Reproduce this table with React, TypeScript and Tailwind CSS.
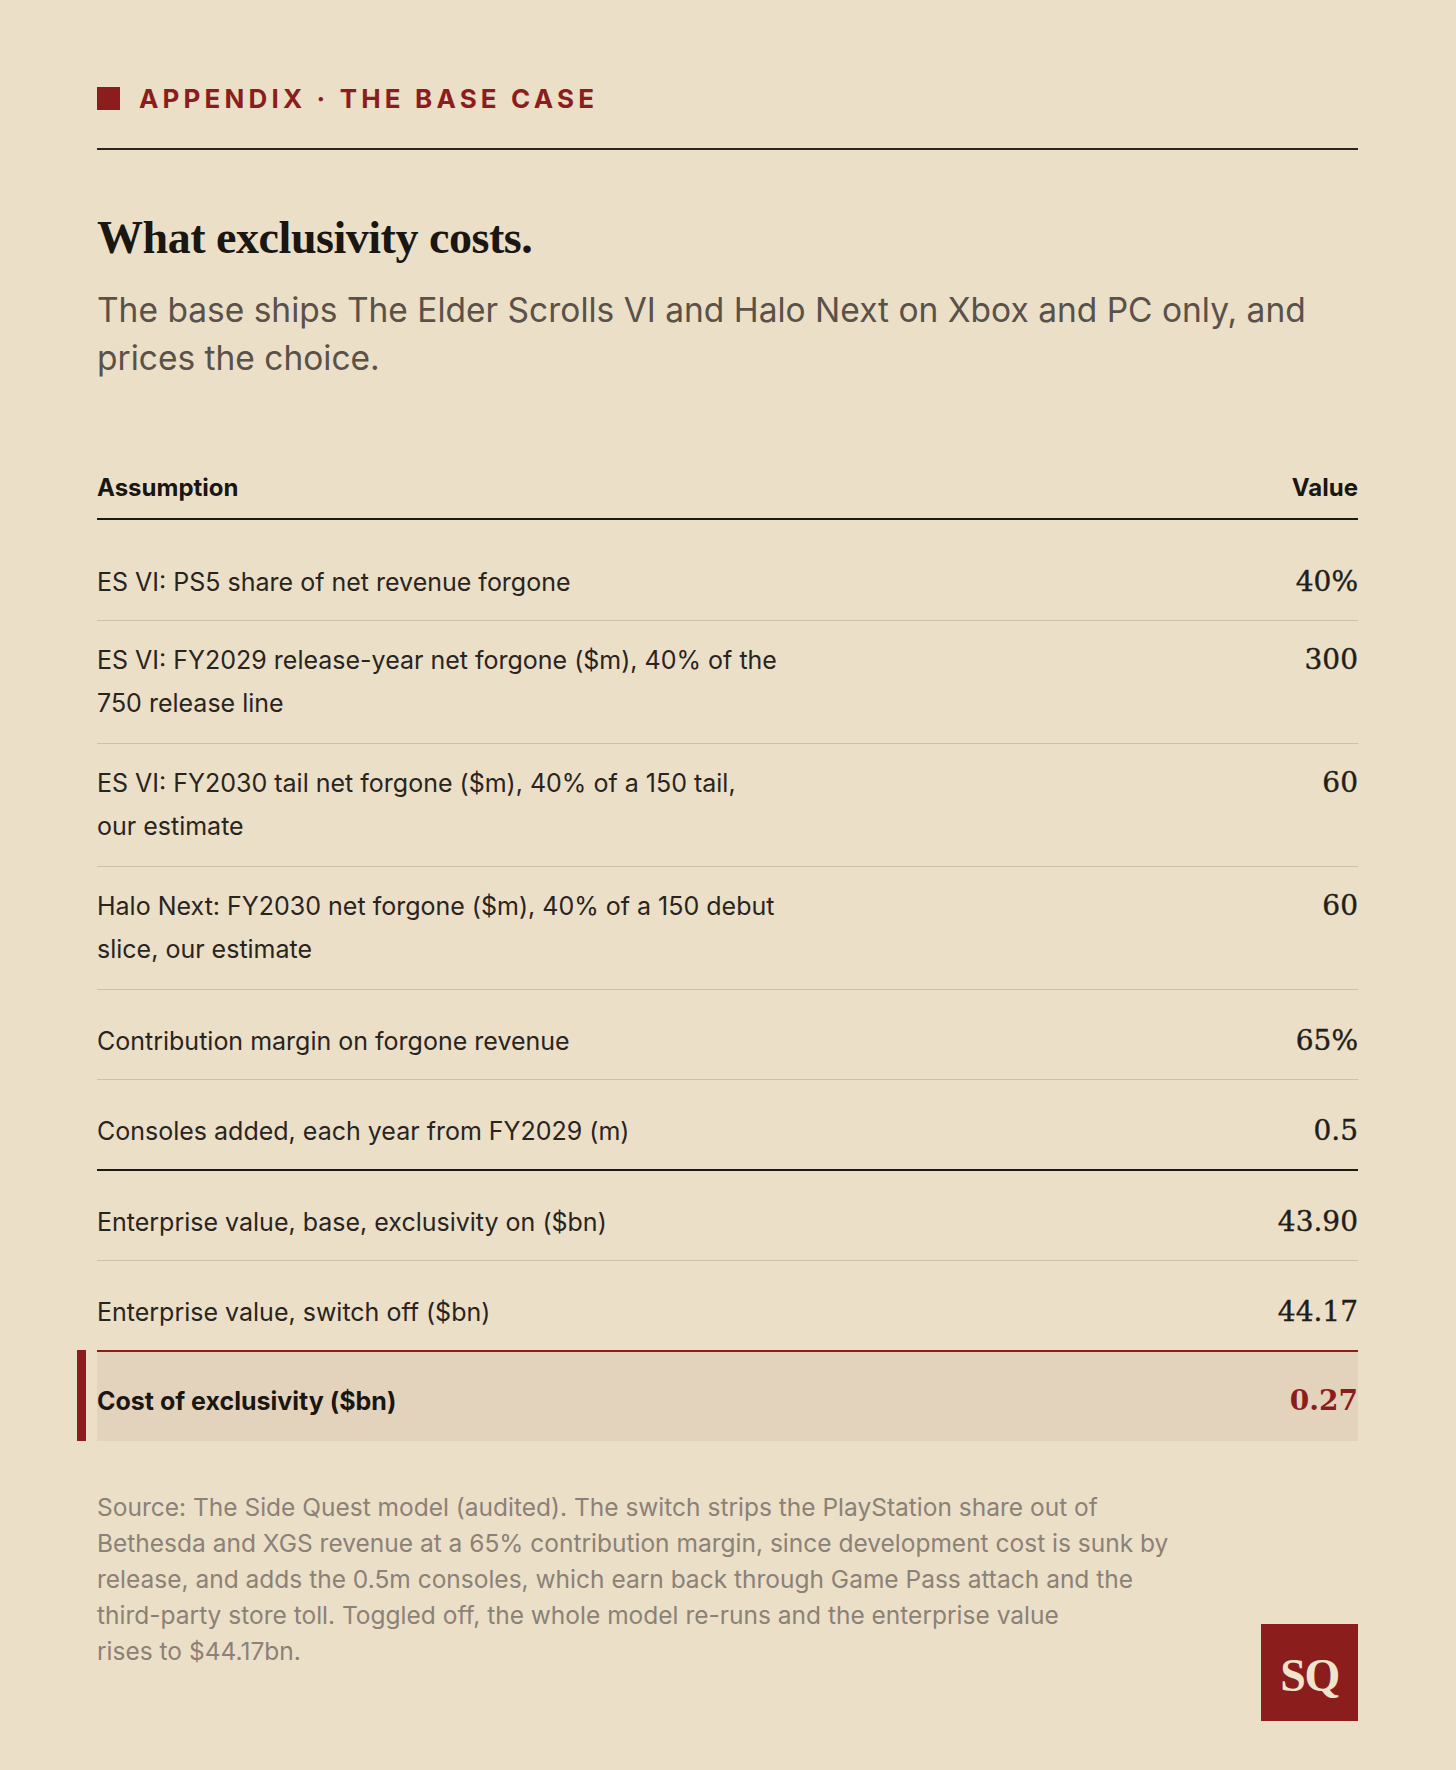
import React from "react";

type Row = {
  lines: string[];
  value: string;
  border: "light" | "dark" | "none";
  first?: boolean;
};

const rows: Row[] = [
  { lines: ["ES VI: PS5 share of net revenue forgone"], value: "40%", border: "light", first: true },
  { lines: ["ES VI: FY2029 release-year net forgone ($m), 40% of the", "750 release line"], value: "300", border: "light" },
  { lines: ["ES VI: FY2030 tail net forgone ($m), 40% of a 150 tail,", "our estimate"], value: "60", border: "light" },
  { lines: ["Halo Next: FY2030 net forgone ($m), 40% of a 150 debut", "slice, our estimate"], value: "60", border: "light" },
  { lines: ["Contribution margin on forgone revenue"], value: "65%", border: "light" },
  { lines: ["Consoles added, each year from FY2029 (m)"], value: "0.5", border: "dark" },
  { lines: ["Enterprise value, base, exclusivity on ($bn)"], value: "43.90", border: "light" },
  { lines: ["Enterprise value, switch off ($bn)"], value: "44.17", border: "none" },
];

function TableRow({ row }: { row: Row }) {
  const single = row.lines.length === 1;
  const pad = row.first
    ? "pt-[41px] pb-[16px]"
    : single
    ? "pt-[30px] pb-[16px]"
    : "pt-[18px] pb-[18px]";
  const border =
    row.border === "light"
      ? "border-b border-[#cdbfa9]"
      : row.border === "dark"
      ? "border-b-2 border-[#1d1915]"
      : "";
  return (
    <div className={`flex items-start justify-between ${pad} ${border}`}>
      <div className="text-[25px] leading-[43px] text-[#2a241e] whitespace-nowrap">
        {row.lines.map((l, i) => (
          <React.Fragment key={i}>
            {i > 0 && <br />}
            {l}
          </React.Fragment>
        ))}
      </div>
      <div className="font-['DejaVu_Serif',serif] text-[28px] leading-[41px] text-[#231e19] [-webkit-text-stroke:0.4px_#231e19]">
        {row.value}
      </div>
    </div>
  );
}

export default function App() {
  return (
    <div className="min-h-[1770px] bg-[#ebdfc8] font-['Inter',sans-serif]">
      <div className="pl-[97px] pr-[98px] pt-[84px] pb-[49px]">
        {/* Eyebrow */}
        <div className="flex items-start gap-[19px] pb-[36px] border-b-2 border-[#2a2520]">
          <span className="mt-[3px] block w-[23px] h-[23px] bg-[#8b1d1d]" />
          <span className="mt-[2px] text-[26px] leading-[26px] font-bold tracking-[0.16em] text-[#8b1d1d] uppercase">
            Appendix · The base case
          </span>
        </div>

        {/* Heading */}
        <h1 className="mt-[62px] font-['Liberation_Serif',serif] font-bold text-[46px] leading-[52px] tracking-[-0.01em] text-[#1a1612]">
          What exclusivity costs.
        </h1>
        <p className="mt-[22px] text-[33.5px] leading-[48px] text-[#5a5149]">
          The base ships The Elder Scrolls VI and Halo Next on Xbox and PC only, and
          <br />
          prices the choice.
        </p>

        {/* Table */}
        <div className="mt-[88px]">
          <div className="flex items-baseline justify-between pb-[12px] border-b-2 border-[#1d1915] text-[24px] leading-[36px] font-bold text-[#1a1612]">
            <span>Assumption</span>
            <span>Value</span>
          </div>
          {rows.map((r, i) => (
            <TableRow key={i} row={r} />
          ))}
          <div className="relative flex items-start justify-between pt-[28px] pb-[18px] border-t-2 border-[#8b1d1d] bg-[#e4d3bc]">
            <span className="absolute -left-[20px] -top-[2px] bottom-0 w-[9px] bg-[#8b1d1d]" />
            <span className="text-[25px] leading-[43px] font-bold text-[#1a1612]">
              Cost of exclusivity ($bn)
            </span>
            <span className="font-['DejaVu_Serif',serif] font-bold text-[28px] leading-[41px] text-[#8b1d1d]">
              0.27
            </span>
          </div>
        </div>

        {/* Footer */}
        <div className="mt-[48px] flex items-end justify-between">
          <p className="mb-[52px] text-[24.5px] leading-[36px] text-[#8c8177] whitespace-nowrap">
            Source: The Side Quest model (audited). The switch strips the PlayStation share out of
            <br />
            Bethesda and XGS revenue at a 65% contribution margin, since development cost is sunk by
            <br />
            release, and adds the 0.5m consoles, which earn back through Game Pass attach and the
            <br />
            third-party store toll. Toggled off, the whole model re-runs and the enterprise value
            <br />
            rises to $44.17bn.
          </p>
          <div className="flex h-[97px] w-[97px] shrink-0 items-center justify-center bg-[#8b1d1d]">
            <span className="font-['Liberation_Serif',serif] font-bold text-[46px] leading-none tracking-[-0.03em] text-[#f0e4cd] mt-[6px]">
              SQ
            </span>
          </div>
        </div>
      </div>
    </div>
  );
}
